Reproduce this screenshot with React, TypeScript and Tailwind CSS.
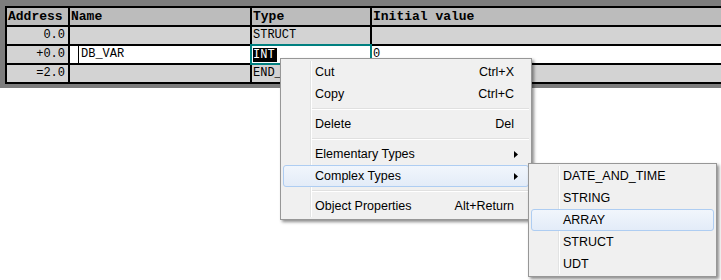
import React from "react";

const mono = { fontFamily: '"Liberation Mono", "DejaVu Sans Mono", monospace' };
const ui = { fontFamily: '"Liberation Sans", Arial, sans-serif' };

function Arrow() {
    return (
        <svg width="4" height="7" viewBox="0 0 4 7" className="absolute right-[10px] top-[7px]">
            <path d="M0 0 L4 3.5 L0 7 Z" fill="#000" />
        </svg>
    );
}

function Item({ label, keys, sub, active }: { label: string; keys?: string; sub?: boolean; active?: boolean }) {
    return (
        <div
            className={`relative h-[22px] mx-[2px] flex items-center rounded-[3px] border ${active
                ? "border-[#aecdf2] bg-gradient-to-b from-[#f1f6fc] to-[#e3ecf8]"
                : "border-transparent"
                }`}
        >
            <span className="pl-[31px] text-[12.5px] text-black">{label}</span>
            {keys && <span className="ml-auto pr-[14px] text-[12.5px] text-black">{keys}</span>}
            {sub && <Arrow />}
        </div>
    );
}

function Sep() {
    return (
        <div className="h-[8px] flex items-center pl-[31px] pr-[2px]">
            <div className="w-full h-[2px] border-t border-[#e0e0e0] border-b border-b-white" />
        </div>
    );
}

export default function App() {
    return (
        <div className="relative w-[721px] h-[280px] bg-white overflow-hidden">
            {/* TABLE AREA */}
            <div className="h-[88px] bg-[#7d7d7d] pt-[6px] pl-[5px] overflow-hidden">
                <div
                    className="w-[800px] grid grid-cols-[61px_180px_118px_1fr] gap-[2px] bg-black p-[2px] text-[12px] text-black"
                    style={mono}
                >
                    {/* header */}
                    <div className="h-[17px] bg-[#bcbcbc] font-bold text-[13px] leading-[17px] pl-[1px]">Address</div>
                    <div className="h-[17px] bg-[#bcbcbc] font-bold text-[13px] leading-[17px] pl-[1px]">Name</div>
                    <div className="h-[17px] bg-[#bcbcbc] font-bold text-[13px] leading-[17px] pl-[1px]">Type</div>
                    <div className="h-[17px] bg-[#bcbcbc] font-bold text-[13px] leading-[17px] pl-[1px]">Initial value</div>

                    {/* row 1 */}
                    <div className="h-[17px] bg-[#d3d3d3] leading-[17px] text-right pr-[3px]">0.0</div>
                    <div className="h-[17px] bg-[#d3d3d3]" />
                    <div className="h-[17px] bg-[#d3d3d3] leading-[17px] pl-[1px]">STRUCT</div>
                    <div className="h-[17px] bg-[#d3d3d3]" />

                    {/* row 2 */}
                    <div className="h-[17px] bg-[#d3d3d3] leading-[17px] text-right pr-[3px]">+0.0</div>
                    <div className="h-[17px] bg-white flex">
                        <div className="w-[8px]" />
                        <div className="w-[1px] bg-black" />
                        <div className="pl-[2px] leading-[17px]">DB_VAR</div>
                    </div>
                    <div className="h-[17px] bg-white relative">
                        <div className="absolute -inset-[2px] border-2 border-[#008080]" />
                        <span className="relative bg-black text-white leading-[17px] ml-[1px] pr-[2px]">INT</span>
                    </div>
                    <div className="h-[17px] bg-white leading-[17px] pl-[1px]">0</div>

                    {/* row 3 */}
                    <div className="h-[17px] bg-[#d3d3d3] leading-[17px] text-right pr-[3px]">=2.0</div>
                    <div className="h-[17px] bg-[#d3d3d3]" />
                    <div className="h-[17px] bg-[#d3d3d3] leading-[17px] pl-[1px] overflow-hidden w-[30px]">END_</div>
                    <div className="h-[17px] bg-[#d3d3d3]" />
                </div>
            </div>

            {/* CONTEXT MENU */}
            <div
                className="absolute left-[280px] top-[58px] w-[252px] bg-[#f0f0f0] border border-[#979797] py-[2px] shadow-[2px_2px_3px_rgba(0,0,0,0.45)]"
                style={ui}
            >
                <div className="absolute left-[29px] top-[2px] bottom-[2px] w-[2px] border-l border-[#e2e3e3] border-r border-r-white" />
                <Item label="Cut" keys="Ctrl+X" />
                <Item label="Copy" keys="Ctrl+C" />
                <Sep />
                <Item label="Delete" keys="Del" />
                <Sep />
                <Item label="Elementary Types" sub />
                <Item label="Complex Types" sub active />
                <Sep />
                <Item label="Object Properties" keys="Alt+Return" />
            </div>

            {/* SUBMENU */}
            <div
                className="absolute left-[528px] top-[163px] w-[189px] bg-[#f0f0f0] border border-[#979797] py-[1px] shadow-[2px_2px_3px_rgba(0,0,0,0.45)]"
                style={ui}
            >
                <div className="absolute left-[29px] top-[2px] bottom-[2px] w-[2px] border-l border-[#e2e3e3] border-r border-r-white" />
                <Item label="DATE_AND_TIME" />
                <Item label="STRING" />
                <Item label="ARRAY" active />
                <Item label="STRUCT" />
                <Item label="UDT" />
            </div>
        </div>
    );
}
